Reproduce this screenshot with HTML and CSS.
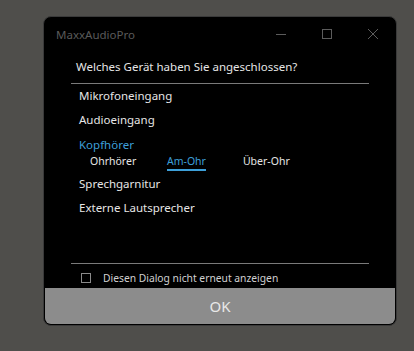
FILE: index.html
```html
<!DOCTYPE html>
<html lang="de">
<head>
    <meta charset="UTF-8">
    <title>MaxxAudioPro</title>
    <link rel="stylesheet" href="styles.css">
</head>
<body>
    <div class="window">
        <div class="titlebar">
            <span class="title">MaxxAudioPro</span>
            <div class="controls">
                <svg width="12" height="12" viewBox="0 0 12 12"><path d="M1 6.5h10" stroke="#5c5c5c" stroke-width="1"/></svg>
                <svg width="12" height="12" viewBox="0 0 12 12"><rect x="1.5" y="1.5" width="9" height="9" fill="none" stroke="#5c5c5c" stroke-width="1"/></svg>
                <svg width="12" height="12" viewBox="0 0 12 12"><path d="M1 1l10 10M11 1L1 11" stroke="#5c5c5c" stroke-width="1"/></svg>
            </div>
        </div>

        <div class="content">
            <h1>Welches Gerät haben Sie angeschlossen?</h1>
            <hr class="sep">

            <ul class="devices">
                <li>Mikrofoneingang</li>
                <li>Audioeingang</li>
                <li class="active">Kopfhörer
                    <div class="sub">
                        <span>Ohrhörer</span>
                        <span class="selected">Am-Ohr</span>
                        <span>Über-Ohr</span>
                    </div>
                </li>
                <li>Sprechgarnitur</li>
                <li>Externe Lautsprecher</li>
            </ul>

            <hr class="sep">
            <label class="check">
                <span class="box"></span>
                Diesen Dialog nicht erneut anzeigen
            </label>
        </div>

        <button class="ok">OK</button>
    </div>
</body>
</html>
```

FILE: styles.css
```css
* {
    box-sizing: border-box;
    margin: 0;
    padding: 0;
}

body {
    background-color: #4f4e4b;
    font-family: "Noto Sans", sans-serif;
    padding: 16px 0 0 43px;
}

.window {
    width: 354px;
    height: 310px;
    background-color: #000;
    border: 1px solid #3a3a3a;
    border-radius: 8px;
    display: flex;
    flex-direction: column;
    overflow: hidden;
}

.titlebar {
    height: 34px;
    display: flex;
    align-items: center;
    justify-content: space-between;
    padding: 0 17px 0 12px;
}

.title {
    font-size: 11.5px;
    color: #5a5a5a;
}

.controls {
    display: flex;
    gap: 34px;
}

.content {
    flex: 1;
    padding: 0 27px;
}

h1 {
    font-size: 11.5px;
    font-weight: normal;
    color: #e6e6e6;
    padding-left: 5px;
    margin-top: 7px;
    line-height: 18px;
}

.sep {
    border: none;
    border-top: 1px solid #7a7a7a;
    margin: 7px 0 0 0;
}

.devices {
    list-style: none;
    padding: 0 0 0 8px;
    height: 172px;
}

.devices li {
    font-size: 11.5px;
    color: #e6e6e6;
    line-height: 24px;
}

.devices li.active {
    color: #3d9fd8;
    line-height: 16px;
    padding-top: 5px;
}

.sub {
    display: flex;
    font-size: 10.5px;
    color: #e6e6e6;
    padding: 0 0 1px 11px;
    line-height: 16px;
}

.sub span {
    width: 77px;
}

.sub .selected {
    color: #3d9fd8;
    width: auto;
    margin-right: 37px;
    border-bottom: 2px solid #3d9fd8;
}

.check {
    display: flex;
    align-items: center;
    gap: 12px;
    font-size: 10.3px;
    line-height: 14px;
    color: #d0d0d0;
    padding: 7px 0 0 10px;
}

.box {
    width: 10px;
    height: 10px;
    border: 1px solid #8a8a8a;
}

.ok {
    height: 36px;
    margin: 0 1px 1px 1px;
    background-color: #8c8c8c;
    border: none;
    border-radius: 0 0 6px 6px;
    color: #e8e8e8;
    font-family: "Noto Sans", sans-serif;
    font-size: 15px;
}
```
